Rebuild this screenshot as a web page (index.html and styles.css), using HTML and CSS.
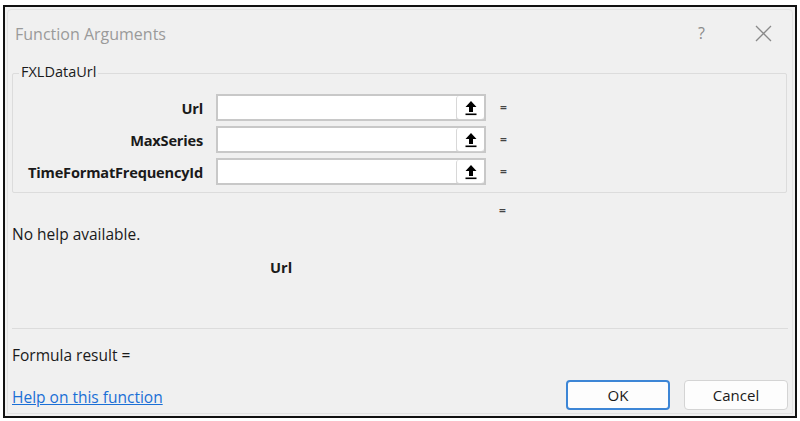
FILE: index.html
```html
<!DOCTYPE html>
<html>
<head>
<meta charset="utf-8">
<link rel="stylesheet" href="styles.css">
</head>
<body>
<div class="dialog">
  <div class="inner">
    <div class="titlebar">
      <span class="title">Function Arguments</span>
      <span class="tb-help">?</span>
      <svg class="tb-close" width="17" height="17" viewBox="0 0 17 17"><path d="M1 1L16 16M16 1L1 16" stroke="#8a8a8a" stroke-width="1.3" fill="none"/></svg>
    </div>
    <div class="group">
      <div class="legend">FXLDataUrl</div>
      <div class="rows">
        <div class="row">
          <span class="lbl">Url</span>
          <div class="field"><div class="refbtn"><svg width="14" height="16" viewBox="0 0 14 16"><path d="M7 1L1.5 7H5v5h4V7h3.5z" fill="#000"/><rect x="1.5" y="13.5" width="11" height="1.6" fill="#000"/></svg></div></div>
          <span class="eq">=</span>
        </div>
        <div class="row">
          <span class="lbl">MaxSeries</span>
          <div class="field"><div class="refbtn"><svg width="14" height="16" viewBox="0 0 14 16"><path d="M7 1L1.5 7H5v5h4V7h3.5z" fill="#000"/><rect x="1.5" y="13.5" width="11" height="1.6" fill="#000"/></svg></div></div>
          <span class="eq">=</span>
        </div>
        <div class="row">
          <span class="lbl">TimeFormatFrequencyId</span>
          <div class="field"><div class="refbtn"><svg width="14" height="16" viewBox="0 0 14 16"><path d="M7 1L1.5 7H5v5h4V7h3.5z" fill="#000"/><rect x="1.5" y="13.5" width="11" height="1.6" fill="#000"/></svg></div></div>
          <span class="eq">=</span>
        </div>
      </div>
    </div>
    <div class="result-eq"><span class="eq">=</span></div>
    <div class="nohelp">No help available.</div>
    <div class="argname">Url</div>
    <div class="sep"></div>
    <div class="formula">Formula result =</div>
    <div class="footer">
      <a class="helplink" href="#">Help on this function</a>
      <div class="buttons">
        <button class="btn ok">OK</button>
        <button class="btn">Cancel</button>
      </div>
    </div>
  </div>
</div>
</body>
</html>
```
FILE: styles.css
```css
html, body {
  margin: 0;
  padding: 0;
  background: #ffffff;
}
body {
  width: 800px;
  height: 421px;
  overflow: hidden;
  font-family: "Open Sans", "Noto Sans", sans-serif;
  font-size: 15.5px;
  line-height: 20px;
  color: #1a1a1a;
}
.dialog {
  margin: 5px 0 0 3px;
  width: 790px;
  height: 409px;
  border: 2px solid #111;
  background: #f0f0f0;
}
.inner {
  margin: 2px;
  height: 405px;
  border: 1px solid #e2e2e2;
  border-radius: 4px 4px 0 0;
  box-sizing: border-box;
  padding: 0 4px 0 4px;
  display: flex;
  flex-direction: column;
}
.titlebar {
  height: 46px;
  display: flex;
  align-items: center;
  padding-left: 3px;
}
.title {
  font-size: 16px;
  color: #9a9a9a;
  flex: 1;
  padding-top: 1px;
}
.tb-help {
  font-size: 16px;
  color: #8a8a8a;
  margin-right: 50px;
}
.tb-close {
  margin-right: 16px;
}
.group {
  margin-top: 17px;
  margin-right: 1px;
  height: 120px;
  flex: none;
  border: 1px solid #dcdcdc;
  border-radius: 2px;
  position: relative;
  box-sizing: border-box;
}
.legend {
  position: absolute;
  top: -11px;
  left: 6px;
  padding: 0 2px;
  background: #f0f0f0;
  font-size: 14.5px;
  line-height: 18px;
  color: #1a1a1a;
}
.rows {
  display: flex;
  flex-direction: column;
  gap: 5px;
  padding-top: 20px;
}
.row {
  display: flex;
  align-items: center;
  height: 27px;
}
.lbl {
  width: 190px;
  text-align: right;
  font-weight: bold;
  font-size: 14.6px;
  letter-spacing: -0.2px;
}
.field {
  margin-left: 13px;
  width: 270px;
  height: 27px;
  box-sizing: border-box;
  border: 2px solid #c8c8c8;
  background: #fff;
  display: flex;
  justify-content: flex-end;
  align-items: center;
}
.refbtn {
  width: 27px;
  height: 23px;
  border-left: 1px solid #d8d8d8;
  border-radius: 3px;
  box-shadow: 0 1px 0 #d0d0d0;
  display: flex;
  align-items: center;
  justify-content: center;
  background: #fff;
}
.eq {
  margin-left: 14px;
  font-weight: bold;
  font-size: 12px;
  color: #444;
}
.result-eq {
  padding-left: 473px;
  height: 24px;
  flex: none;
  display: flex;
  align-items: center;
  margin-top: 6px;
}
.nohelp {
  margin-top: 1px;
}
.argname {
  margin-top: 13px;
  padding-left: 258px;
  font-weight: bold;
  font-size: 14.6px;
}
.sep {
  margin-top: 51px;
  height: 1px;
  flex: none;
  background: #dcdcdc;
}
.formula {
  margin-top: 16px;
}
.footer {
  margin-top: 15px;
  display: flex;
  justify-content: space-between;
  align-items: center;
}
.helplink {
  color: #1a6fd6;
  text-decoration: underline;
  font-size: 15.5px;
  margin-top: 4px;
}
.buttons {
  display: flex;
  gap: 14px;
  margin-right: 0;
}
.btn {
  width: 104px;
  height: 30px;
  font-family: "Open Sans", "Noto Sans", sans-serif;
  font-size: 15px;
  color: #1a1a1a;
  background: #fdfdfd;
  border: 1px solid #d4d4d4;
  border-radius: 4px;
}
.btn.ok {
  border: 2px solid #3d86d6;
}
```
